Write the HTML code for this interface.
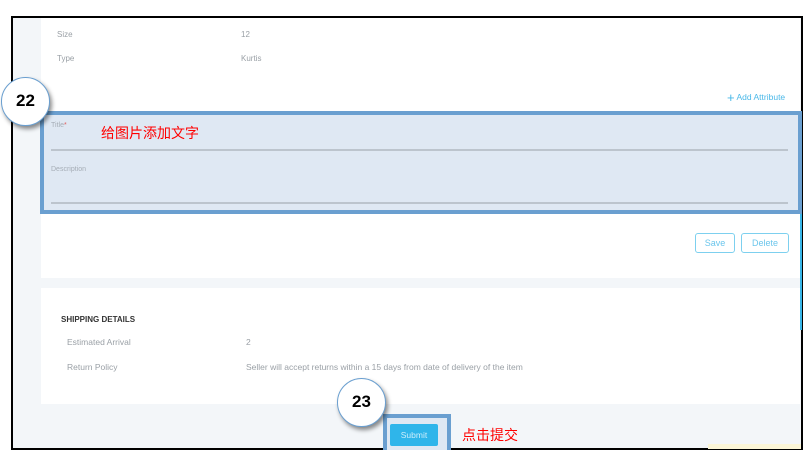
<!DOCTYPE html>
<html><head><meta charset="utf-8"><style>
*{margin:0;padding:0;box-sizing:border-box}
body{width:811px;height:461px;background:#fff;position:relative;overflow:hidden;font-family:"Liberation Sans","Noto Sans CJK SC",sans-serif}
.a{position:absolute}
.lbl{font-size:8px;color:#9aa0a6}
.lbl2{font-size:8.5px;color:#9aa0a6}
</style></head><body>
<div class="a" style="left:11px;top:16px;width:792px;height:434px;border:2px solid #000;background:#f3f6f9"></div>
<div class="a" style="left:41px;top:18px;width:759px;height:260px;background:#fff"></div>
<div class="a lbl" style="left:57px;top:30px">Size</div>
<div class="a lbl" style="left:241px;top:30px">12</div>
<div class="a lbl" style="left:57px;top:54px">Type</div>
<div class="a lbl" style="left:241px;top:54px">Kurtis</div>
<div class="a" style="left:727px;top:92px;font-size:8.5px;color:#4ab8e8"><span style="font-size:13px;line-height:8px;vertical-align:-2px">+</span> Add Attribute</div>
<div class="a" style="left:40px;top:111px;width:762px;height:103px;background:#dfe8f3;border:4px solid #6a9fd0"></div>
<div class="a" style="left:51px;top:122px;font-size:7px;color:#a5adb6">Title<span style="color:#e06060">*</span></div>
<div class="a" style="left:101px;top:123px;font-size:14px;color:#ff0000">给图片添加文字</div>
<div class="a" style="left:51px;top:149px;width:737px;height:2px;background:#bcc4cd"></div>
<div class="a" style="left:51px;top:166px;font-size:7px;color:#a5adb6">Description</div>
<div class="a" style="left:51px;top:202px;width:737px;height:2px;background:#bcc4cd"></div>
<div class="a" style="left:800px;top:214px;width:2px;height:116px;background:#38b6e8"></div>
<div class="a" style="left:695px;top:233px;width:40px;height:20px;border:1px solid #7dd0ef;border-radius:3px;font-size:9px;color:#6cc6ec;text-align:center;line-height:18px">Save</div>
<div class="a" style="left:741px;top:233px;width:48px;height:20px;border:1px solid #7dd0ef;border-radius:3px;font-size:9px;color:#6cc6ec;text-align:center;line-height:18px">Delete</div>
<div class="a" style="left:41px;top:288px;width:759px;height:116px;background:#fff"></div>
<div class="a" style="left:61px;top:315px;font-size:8px;font-weight:bold;color:#333">SHIPPING DETAILS</div>
<div class="a lbl2" style="left:67px;top:337px">Estimated Arrival</div>
<div class="a lbl2" style="left:246px;top:337px">2</div>
<div class="a lbl2" style="left:67px;top:362px">Return Policy</div>
<div class="a lbl2" style="left:246px;top:362px">Seller will accept returns within a 15 days from date of delivery of the item</div>
<div class="a" style="left:383px;top:414px;width:68px;height:36px;background:#dfe8f3;border:4px solid #6a9fd0;border-bottom:none"></div>
<div class="a" style="left:390px;top:424px;width:48px;height:22px;background:#2fb5ea;border-radius:2px;color:#cdeefb;font-size:8.5px;text-align:center;line-height:22px">Submit</div>
<div class="a" style="left:462px;top:425px;font-size:14px;color:#ff0000">点击提交</div>
<div class="a" style="left:708px;top:444px;width:93px;height:5px;background:#fbf6d8"></div>
<div class="a" style="left:1px;top:77px;width:49px;height:49px;border-radius:50%;background:#fff;border:1.5px solid #6a9fd0;box-shadow:2px 3px 4px rgba(0,0,0,.45);font-size:17px;font-weight:bold;text-align:center;line-height:46px;color:#000">22</div>
<div class="a" style="left:337px;top:378px;width:49px;height:49px;border-radius:50%;background:#fff;border:1.5px solid #6a9fd0;box-shadow:2px 3px 4px rgba(0,0,0,.45);font-size:17px;font-weight:bold;text-align:center;line-height:46px;color:#000">23</div>
</body></html>
